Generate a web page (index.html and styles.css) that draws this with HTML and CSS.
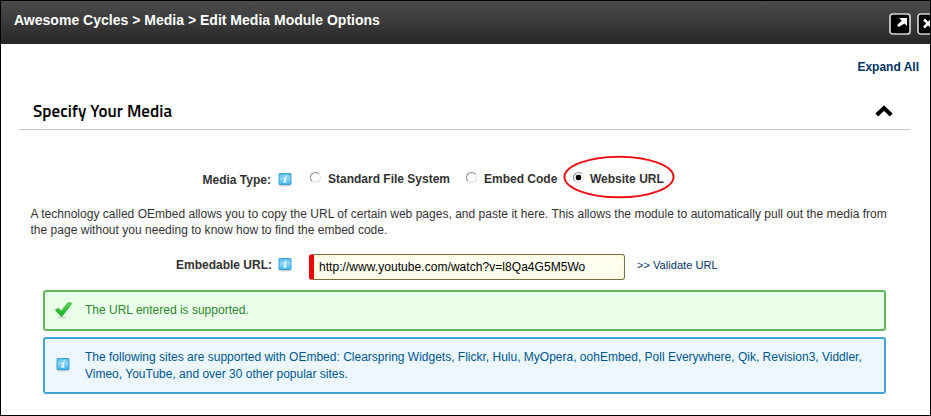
FILE: index.html
```html
<!DOCTYPE html>
<html lang="en">
<head>
<meta charset="utf-8">
<title>Edit Media Module Options</title>
<link rel="stylesheet" href="styles.css">
</head>
<body>
<svg class="defs" width="0" height="0" aria-hidden="true">
  <defs>
    <linearGradient id="blue" x1="0" y1="0" x2="0" y2="1"><stop offset="0" stop-color="#58bce9"/><stop offset=".45" stop-color="#8ed8f6"/><stop offset="1" stop-color="#3fb3ec"/></linearGradient>
    <linearGradient id="green" x1="0" y1="0" x2="0" y2="1"><stop offset="0" stop-color="#5fd35a"/><stop offset="1" stop-color="#10b020"/></linearGradient>
    <symbol id="info" viewBox="0 0 14 15">
      <ellipse cx="7" cy="13.400" rx="6" ry="1.200" fill="#000" opacity=".18"/>
      <rect x="1" y="1.500" width="12" height="11" rx=".5" fill="url(#blue)" stroke="#3a9fd4"/>
      <path d="M7.600 3.400h1.500l-.4 1.400H7.200zM5.600 5.500h2.800L7.500 9.300h1l-.2 1.100H5.100l.2-1.100h.8l.6-2.700H5.400z" fill="#fff"/>
    </symbol>
  </defs>
</svg>
<div class="dialog">
  <header class="titlebar">
    <h1 class="title">Awesome Cycles &gt; Media &gt; Edit Media Module Options</h1>
    <div class="tools">
      <svg class="tool" width="22" height="22" viewBox="0 0 22 22"><rect x="1" y="1" width="20" height="20" rx="2.500" fill="#000" stroke="#d4d4d4" stroke-width="1.700"/><path d="M10 5h8v8l-2.600-2.600L9.800 14 8 12.300l4.800-4.600z" fill="#fff"/></svg>
      <svg class="tool" width="22" height="22" viewBox="0 0 22 22"><rect x="1" y="1" width="20" height="20" rx="2.500" fill="#000" stroke="#d4d4d4" stroke-width="1.700"/><path d="M7 6.500l8 8M15 6.500l-8 8" stroke="#fff" stroke-width="2.600"/></svg>
    </div>
  </header>
  <main class="content">
    <div class="expand"><a class="expand-link">Expand All</a></div>
    <section class="section">
      <h2 class="heading">Specify Your Media</h2>
      <svg class="chevron" width="18" height="12" viewBox="0 0 18 12"><path d="M1.800 10L9 3l7.200 7" fill="none" stroke="#000" stroke-width="4"/></svg>
    </section>
    <div class="row types">
      <span class="label media-label">Media Type:</span>
      <svg class="info" width="14" height="15"><use href="#info"/></svg>
      <span class="option one"><i class="radio"></i><span class="label">Standard File System</span></span>
      <span class="option two"><i class="radio"></i><span class="label">Embed Code</span></span>
      <span class="option three"><i class="radio on"></i><span class="label">Website URL</span>
        <svg class="ring" width="112" height="44" viewBox="0 0 112 44"><ellipse cx="56" cy="22" rx="54.500" ry="20.300" fill="none" stroke="#f01014" stroke-width="2"/></svg>
      </span>
    </div>
    <p class="help">A technology called OEmbed allows you to copy the URL of certain web pages, and paste it here. This allows the module to automatically pull out the media from<br>the page without you needing to know how to find the embed code.</p>
    <div class="row url">
      <span class="label url-label">Embedable URL:</span>
      <svg class="info" width="14" height="15"><use href="#info"/></svg>
      <div class="field"><span class="value">http://www.youtube.com/watch?v=l8Qa4G5M5Wo</span></div>
      <a class="validate">&gt;&gt; Validate URL</a>
    </div>
    <div class="message success">
      <svg class="check" width="20" height="18" viewBox="0 0 20 18"><ellipse cx="8" cy="16.200" rx="5" ry="1" fill="#000" opacity=".15"/><path d="M1.200 9.200L4.200 7l3 2.800L14.200 1.300l3.800 1-3.500 5L7.600 15.800z" fill="url(#green)" stroke="#35a83a" stroke-width=".6"/></svg>
      <p class="msg">The URL entered is supported.</p>
    </div>
    <div class="message note">
      <svg class="info" width="14" height="15"><use href="#info"/></svg>
      <p class="msg">The following sites are supported with OEmbed: Clearspring Widgets, Flickr, Hulu, MyOpera, oohEmbed, Poll Everywhere, Qik, Revision3, Viddler,<br>Vimeo, YouTube, and over 30 other popular sites.</p>
    </div>
  </main>
</div>
</body>
</html>
```
FILE: styles.css
```css
* { box-sizing: border-box; }
body { margin: 0; font: 12px/16px "Liberation Sans", Arial, sans-serif; color: #333; background: #fff; }
h1, h2, p { margin: 0; }
.defs { position: absolute; }
.dialog { width: 931px; height: 416px; border: 1px solid #000; overflow: hidden; white-space: nowrap; }
.titlebar { display: flex; height: 43px; background: linear-gradient(#4c4c4c, #272727); overflow: hidden; }
.title { margin: 11px 0 0 13px; width: 874px; flex: none; font-size: 14px; line-height: 16px; letter-spacing: .01px; color: #fff; }
.tools { display: flex; flex: none; gap: 6px; margin: 12px 0 0 1px; }
.tool { flex: none; }
.expand { display: flex; justify-content: flex-end; height: 45px; padding: 15px 11px 0 0; }
.expand-link { color: #003366; font-weight: bold; }
.section { display: flex; justify-content: space-between; width: 891px; height: 41px; margin-left: 18px; padding: 10px 17px 0 14px; border-bottom: 1px solid #c8c8c8; }
.heading { font: 600 17px/24px "Titillium Web", "Open Sans", sans-serif; letter-spacing: .08px; color: #000; }
.chevron { margin-top: 6px; }
.row { display: flex; }
.label { font-weight: bold; color: #333; }
.types { height: 76px; padding-top: 41px; }
.media-label { margin: 1px 7px 0 0; width: 270px; text-align: right; }
.info { flex: none; margin-top: 1px; }
.option { display: flex; position: relative; flex: none; }
.one { margin-left: 18px; width: 156px; }
.two { width: 107px; }
.radio { width: 11px; height: 11px; margin: 1px 7px 0 0; border: 1.500px solid; border-color: #888 #ddd #ddd #888; border-radius: 50%; flex: none; }
.on { background: radial-gradient(circle, #000 0 2.600px, #fff 3.200px); }
.ring { position: absolute; left: -10px; top: -16px; }
.three .radio { margin-right: 6px; }
.help { padding-left: 29.500px; height: 47px; letter-spacing: .02px; }
.url { height: 37px; }
.url-label { margin: 4px 6px 0 0; width: 271px; text-align: right; }
.url .info { margin-top: 4px; }
.field { width: 316px; height: 26px; margin: 1px 12px 0 17px; padding: 4px 0 0 5px; border: 1px solid #776f45; border-left: 5px solid #f00000; border-radius: 3px; background: #fffff0; box-shadow: inset 0 0 5px #fff2c8; color: #000; letter-spacing: .05px; }
.validate { margin-top: 4px; color: #003366; font-size: 11px; letter-spacing: .05px; }
.message { display: flex; align-items: center; width: 843px; margin-left: 42px; border: 2px solid; border-radius: 3px; }
.success { height: 41px; margin-bottom: 6px; border-color: #62b858; background: #eaffea; color: #2e8430; }
.note { height: 57px; border-color: #45a3d4; background: #ecf7ff; color: #00568f; }
.check { margin: -1px 11px 0 9px; }
.msg { line-height: 17px; }
.success .msg { margin-top: 0; }
.note .info { margin: -2px 15px 0 11px; }
```
